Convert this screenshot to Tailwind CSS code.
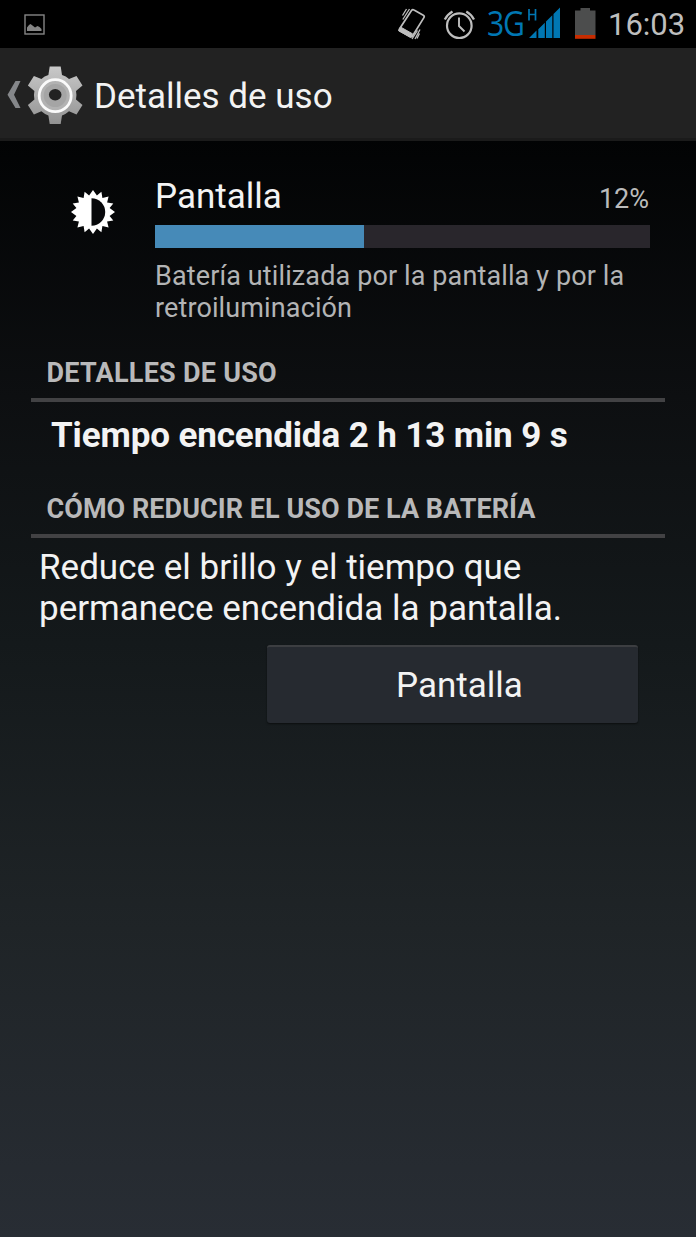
<!DOCTYPE html>
<html lang="es">

<head>
    <meta charset="UTF-8">
    <meta name="viewport" content="width=device-width, initial-scale=1.0">
    <title>Detalles de uso</title>
    <script src="https://cdn.jsdelivr.net/npm/@tailwindcss/browser@4"></script>
</head>

<body class="bg-black font-['Roboto',sans-serif] text-[#f3f3f3]">
    <div class="w-full h-[1237px] flex flex-col overflow-hidden bg-[linear-gradient(to_bottom,#020304_11%,#0d0f11_32%,#14191b_52%,#1f2427_75%,#282d34_100%)]">
        <!-- status bar -->
        <header class="h-12 shrink-0 bg-black flex items-center pl-6 pr-3">
            <svg class="w-[21px] h-[21px]" viewBox="0 0 21 21">
                <rect x="1" y="1" width="19" height="19" fill="none" stroke="#858585" stroke-width="1.4" />
                <path d="M3 17v-3.500l2-2.500 1.500-1 2 1.500 2.500 2 2.500-1.500 2 1 2 2v2z" fill="#858585" />
            </svg>
            <div class="ml-auto flex items-center">
                <svg class="w-[30px] h-[34px]" viewBox="398 7 30 34" fill="none" stroke="#bebebe">
                    <path d="M412.500 10.500q1-1.500 2.500-.6l9.300 5.300q1.500.9.600 2.400L413.500 36q-.8 1.400-2.300.6l-10-5.600q-1.500-.9-.6-2.300z" stroke-width="1.700" />
                    <path d="M401.500 27l12 6.800-2 3.700-12-6.800z" fill="#bebebe" stroke-width="1" />
                    <path d="M403.800 19.500l6.700-10.500M403.500 15.500l4-6.500M421 29.500l-5 9.500M418.500 30.500l-5.500 8.500M420.500 33.500l-2.500 5" stroke-width="1.300" />
                </svg>
                <svg class="ml-4 w-[32px] h-[32px]" viewBox="443 8 32 32" fill="none" stroke="#bebebe">
                    <circle cx="459.300" cy="25.700" r="12.300" stroke-width="2.200" />
                    <path d="M459 17.500v8.500l5.500 5.500" stroke-width="1.900" />
                    <path d="M444.800 19.500q2.500-5 7.700-8M474 19.500q-2.500-5-7.700-8" stroke-width="2.300" />
                </svg>
                <div class="ml-[12px] flex text-[#0077b3]">
                    <span class="font-['Open_Sans'] font-medium text-[35px] leading-[46px] tracking-[-1.5px] w-[40px] origin-left scale-x-[.86]">3G</span>
                    <svg class="w-[34px] h-12" viewBox="527 0 34 48" fill="currentColor">
                        <path d="M529 38l7.500-7.500V38zM538.300 29.200l6.500-6.500v15.300h-6.500zM546 21.500l6.300-6.300V38H546zM553.500 14l6.500-6.500V38h-6.500z" />
                        <path d="M529 9v11.500M535.500 9v11.500M529 14.500h6.500" fill="none" stroke="currentColor" stroke-width="1.700" />
                    </svg>
                </div>
                <svg class="ml-[14px] w-[21px] h-12" viewBox="575 0 21 48">
                    <path d="M575 10.500h5.500v-2.500h9.500v2.500h5.500V35H575z" fill="#4c4d4d" />
                    <path d="M575 35h20.500v3.800H575z" fill="#c72c00" />
                </svg>
                <span class="ml-[12px] w-[76px] pt-px text-[31px] leading-[47px] text-[#bebebe] whitespace-nowrap">16:03</span>
            </div>
        </header>

        <!-- action bar -->
        <div class="h-[93px] shrink-0 bg-[#222] border-b-3 border-[#1b1b1b] flex items-center pl-[7px] pt-[3px]">
            <svg class="w-[14px] h-[30px]" viewBox="8 80 14 30">
                <path d="M16.500 81h5l-6.500 13.700 6.500 13.300h-5L8.500 94.700z" fill="#85878a" />
            </svg>
            <svg class="ml-1.5 w-[56px] h-[60px]" viewBox="27 64 56 60">
                <defs>
                    <linearGradient id="metal" x1="0" y1="0" x2="0" y2="1">
                        <stop offset="0" stop-color="#c9c9c9" />
                        <stop offset="1" stop-color="#929292" />
                    </linearGradient>
                </defs>
                <path d="M49.700 65.500h11l1.300 8.500q4 1.200 7 4l7.500-3 6 9.500-6.500 5.500q1 4.500 0 8.500l6.500 5.500-6 9.500-7.500-3.200q-3 2.800-7 4.200l-1.300 8.500h-11l-1.300-8.500q-4-1.400-7-4.200l-7.500 3.200-6-9.500 6.500-5.500q-1-4 0-8.500l-6.500-5.500 6-9.500 7.500 3q3-2.800 7-4z" fill="url(#metal)" />
                <circle cx="55.200" cy="94.700" r="16" fill="#b2b2b2" stroke="#fafafa" stroke-width="2.800" />
                <circle cx="55.200" cy="94.500" r="11.500" fill="#a5a5a5" />
                <ellipse cx="55.200" cy="93.700" rx="6.300" ry="5.700" fill="#222" />
            </svg>
            <h1 class="ml-[11px] pt-[5px] text-[35px] leading-[48px] whitespace-nowrap">Detalles de uso</h1>
        </div>

        <main class="flex flex-col">
            <section class="flex pt-[36px] pl-[70px] pr-[47px]">
                <svg class="mt-3 w-[46px] h-[46px] shrink-0" viewBox="-23 -23 46 46">
                    <path fill="#fff" d="M0-22L3.900-16.600 8.400-20.300 9.400-14.100 15.600-15.600 14.100-9.400 20.300-8.400 16.600-3.900 22 0 16.600 3.900 20.300 8.400 14.100 9.400 15.600 15.600 9.400 14.100 8.400 20.300 3.900 16.600 0 22-3.900 16.600-8.400 20.300-9.400 14.100-15.600 15.600-14.100 9.400-20.300 8.400-16.600 3.900-22 0-16.600-3.900-20.300-8.400-14.100-9.400-15.600-15.600-9.400-14.100-8.400-20.300-3.900-16.600z" />
                    <path fill="#07080a" d="M-1.500-13.700A13.700 13.700 0 0 1-1.500 13.700z" />
                </svg>
                <div class="ml-[39px] grow">
                    <div class="flex justify-between items-baseline h-10">
                        <h2 class="text-[35px] leading-10">Pantalla</h2>
                        <span class="text-[27px] text-[#bbb]">12%</span>
                    </div>
                    <div class="mt-2 h-[23px] -mr-px bg-[#29262c]">
                        <div class="h-full w-[209px] bg-[#468ab8]"></div>
                    </div>
                    <p class="mt-3 text-[27px] leading-8 tracking-[.12px] text-[#b3b4b5] whitespace-nowrap">Batería utilizada por la pantalla y por la<br>retroiluminación</p>
                </div>
            </section>

            <section class="mt-[33px] ml-[31px] mr-[31px]">
                <h3 class="pl-[15.500px] text-[27px] leading-8 tracking-[.25px] font-bold text-[#b9b9ba] whitespace-nowrap">DETALLES DE USO</h3>
                <div class="mt-[9px] h-1 bg-[#424244]"></div>
                <p class="mt-[14px] pl-5 text-[35px] leading-10 tracking-[-.12px] font-bold whitespace-nowrap">Tiempo encendida 2 h 13 min 9 s</p>
            </section>

            <section class="mt-[37px] ml-[31px] mr-[31px]">
                <h3 class="pl-[15.500px] text-[27px] leading-8 tracking-[.05px] font-bold text-[#b9b9ba] whitespace-nowrap">CÓMO REDUCIR EL USO DE LA BATERÍA</h3>
                <div class="mt-[9px] h-1 bg-[#424244]"></div>
                <p class="mt-[10px] pl-2 text-[35px] leading-[40.500px] whitespace-nowrap">Reduce el brillo y el tiempo que<br>permanece encendida la pantalla.</p>
                <button class="block mt-4 ml-[236px] w-[371px] h-[78px] rounded-[3px] bg-[#262a30] border-t-2 border-[#3c3e41] shadow-[0_1px_2px_#0008] pl-[14px] pt-[3px] text-[35px]">Pantalla</button>
            </section>
        </main>
    </div>
</body>

</html>
